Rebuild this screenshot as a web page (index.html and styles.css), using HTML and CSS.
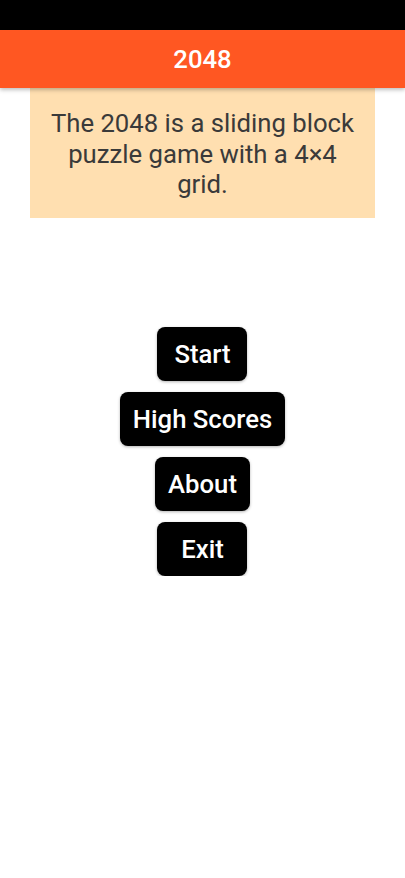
FILE: index.html
```html
<!DOCTYPE html>
<html>
<head>
<meta charset="utf-8">
<link rel="stylesheet" href="styles.css">
</head>
<body>
<div class="status"></div>
<header class="appbar">2048</header>
<main class="content">
  <div class="intro">The 2048 is a sliding block puzzle game with a 4×4 grid.</div>
  <nav class="menu">
    <button class="btn">Start</button>
    <button class="btn">High Scores</button>
    <button class="btn">About</button>
    <button class="btn">Exit</button>
  </nav>
</main>
</body>
</html>
```

FILE: styles.css
```css
html, body {
  margin: 0;
  padding: 0;
  background: #ffffff;
  font-family: Roboto, "Noto Sans", sans-serif;
}
.status {
  height: 30px;
  background: #000000;
}
.appbar {
  height: 58px;
  background: #ff5722;
  color: #ffffff;
  font-size: 25.7px;
  font-weight: 500;
  display: flex;
  align-items: center;
  justify-content: center;
  box-shadow: 0 2px 4px rgba(0,0,0,0.25);
  position: relative;
  z-index: 1;
}
.content {
  display: flex;
  flex-direction: column;
  align-items: center;
}
.intro {
  width: 345px;
  box-sizing: border-box;
  height: 130px;
  background: #ffdfb0;
  color: #3a3a3a;
  font-size: 25.7px;
  line-height: 30.5px;
  text-align: center;
  padding: 20px 12px 0;
}
.menu {
  margin-top: 109px;
  display: flex;
  flex-direction: column;
  align-items: center;
  gap: 11px;
}
.btn {
  height: 54px;
  padding: 0 13px;
  min-width: 90px;
  background: #000000;
  color: #ffffff;
  border: none;
  border-radius: 8px;
  font-family: Roboto, "Noto Sans", sans-serif;
  font-size: 25.7px;
  font-weight: 500;
  box-shadow: 0 1px 3px rgba(0,0,0,0.3);
}
```
